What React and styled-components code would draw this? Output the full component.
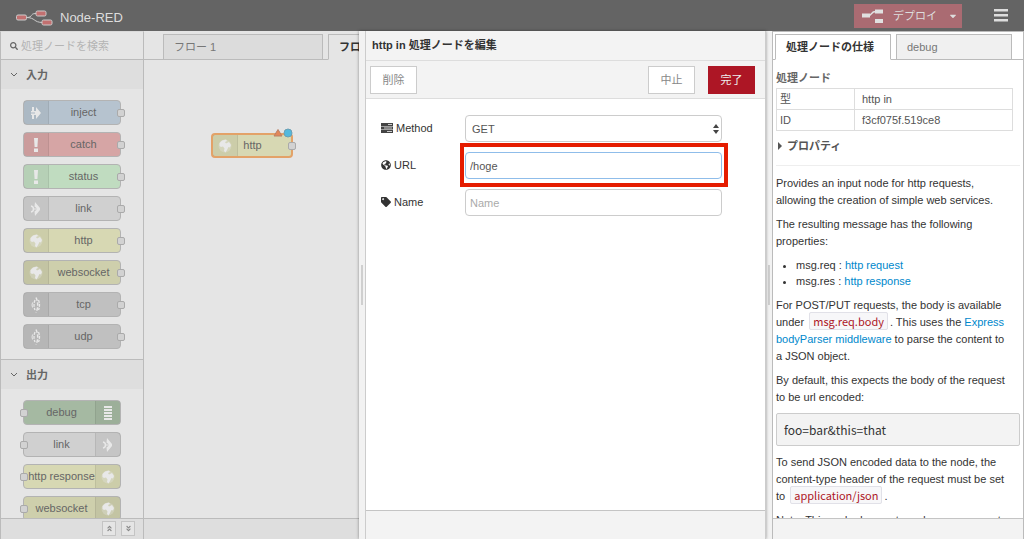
import React from "react";
import styled, { createGlobalStyle, css } from "styled-components";
import { FaSearch, FaGlobeAmericas, FaTag, FaAngleDoubleUp, FaAngleDoubleDown, FaCaretDown } from "react-icons/fa";

const GlobalStyle = createGlobalStyle`
  *, *::before, *::after { box-sizing: border-box; }
  body {
    margin: 0;
    color: #333;
    background: #e5e5e5;
    font: 11px/16px "Liberation Sans", "Noto Sans CJK JP", sans-serif;
  }
  button, input, select { font: inherit; color: inherit; }
  ul, p, h2, h3, pre { margin: 0; padding: 0; }
`;

const Page = styled.div`
  display: flex;
  flex-direction: column;
  height: 100vh;
  overflow: hidden;
`;

const Header = styled.header`
  display: flex;
  align-items: center;
  flex: none;
  height: 31px;
  padding: 0 16px;
  background: #646464;
  color: #ddd;
`;

const Brand = styled.div`
  display: flex;
  align-items: center;
  gap: 7px;
  flex: 1;
  padding-top: 4px;
  font-size: 13px;
`;

const DeployButton = styled.button`
  display: flex;
  align-items: center;
  gap: 9px;
  height: 24px;
  padding: 0 4px 0 7px;
  border: 0;
  background: #aa6b72;
  color: #ddd;
  font-size: 11px;
  svg:last-child { margin-left: 2px; }
`;

const MenuButton = styled.button`
  display: flex;
  margin-left: 32px;
  padding: 0;
  border: 0;
  background: none;
  color: #ddd;
`;

const Main = styled.main`
  display: flex;
  flex: 1;
  min-height: 0;
`;

const Palette = styled.aside`
  display: flex;
  flex-direction: column;
  flex: none;
  width: 144px;
  border: 1px solid #bbb;
  border-bottom: 0;
  border-top-color: #dadada;
  color: #666;
`;

const SearchRow = styled.label`
  display: flex;
  align-items: center;
  gap: 3px;
  flex: none;
  height: 28px;
  padding-left: 9px;
  border-bottom: 1px solid #bbb;
  svg { flex: none; }
`;

const SearchInput = styled.input`
  width: 100%;
  min-width: 0;
  padding: 0;
  border: 0;
  outline: 0;
  background: none;
  &::placeholder { color: #b4b4b4; opacity: 1; }
`;

const PaletteScroll = styled.div`
  flex: 1;
  min-height: 0;
  overflow: hidden;
`;

const Category = styled.section`
  border-bottom: 1px solid #bbb;
`;

const CategoryHeader = styled.h3`
  display: flex;
  align-items: center;
  gap: 8px;
  height: 29px;
  padding-left: 9px;
  background: #dedede;
  font-size: 11px;
`;

const NodeList = styled.div`
  display: flex;
  flex-direction: column;
  align-items: flex-start;
  gap: 7px;
  padding: 11px 22px 10px;
`;

const Node = styled.div`
  position: relative;
  display: flex;
  flex-direction: ${(p) => (p.$output ? "row-reverse" : "row")};
  width: ${(p) => p.$width || 98}px;
  height: 25px;
  border: ${(p) => (p.$selected ? "2px solid #e3a268" : "1px solid #b3b3b3")};
  border-radius: 4px;
  background: ${(p) => p.$color};
  color: #666;
`;

const NodeIcon = styled.span`
  display: flex;
  align-items: center;
  justify-content: center;
  flex: none;
  width: 25px;
  background: rgba(0, 0, 0, 0.05);
  color: #e8e8e8;
  ${(p) => (p.$output ? css`border-left: 1px solid #0001;` : css`border-right: 1px solid #0001;`)}
`;

const NodeLabel = styled.span`
  flex: 1;
  padding: ${(p) => (p.$output ? "0 0 0 4px" : p.$selected ? "0 24px 0 0" : "0 2px 0 0")};
  line-height: ${(p) => (p.$selected ? 20 : 22)}px;
  text-align: center;
  white-space: nowrap;
`;

const Port = styled.i`
  position: absolute;
  top: 50%;
  ${(p) => (p.$output ? "left: -4px" : "right: -5px")};
  width: 8px;
  height: 8px;
  margin-top: -4px;
  border: 1px solid #aaa;
  border-radius: 2px;
  background: #d2d2d2;
`;

const Footer = styled.footer`
  display: flex;
  justify-content: flex-end;
  gap: 5px;
  flex: none;
  height: ${(p) => p.$height || 21}px;
  padding: 2px 8px;
  border-top: 1px solid ${(p) => (p.$dim ? "#bbb" : "#c4c4c4")};
  background: ${(p) => (p.$dim ? "#dedede" : "#f3f3f3")};
`;

const SmallButton = styled.button`
  display: flex;
  align-items: center;
  justify-content: center;
  width: 14px;
  height: 15px;
  padding: 0;
  border: 1px solid #c4c4c4;
  background: #e5e5e5;
  color: #888;
`;

const Workspace = styled.section`
  display: flex;
  flex-direction: column;
  flex: 1;
  min-width: 0;
  overflow: hidden;
`;

const Tabs = styled.div`
  display: flex;
  flex: none;
  gap: 5px;
  height: ${(p) => (p.$sidebar ? 28 : 29)}px;
  padding: ${(p) => (p.$sidebar ? "2px 11px 0 2px" : "3px 0 0 19px")};
  box-shadow: inset 0 -1px #bbb;
`;

const Tab = styled.button`
  flex: ${(p) => (p.$fill ? "1 1 0" : "none")};
  width: ${(p) => (p.$fill ? "auto" : "160px")};
  height: 26px;
  padding: 0 10px;
  border: 1px solid #bbb;
  border-bottom-color: ${(p) => (p.$active ? p.$bg : "#bbb")};
  background: ${(p) => p.$bg};
  color: ${(p) => (p.$active ? "#333" : "#777")};
  font-weight: ${(p) => (p.$active ? "bold" : "normal")};
  text-align: left;
  white-space: nowrap;
`;

const Canvas = styled.div`
  position: relative;
  flex: 1;
`;

const CanvasNode = styled.div`
  position: absolute;
  left: 67px;
  top: 73px;
`;

const Badges = styled.svg`
  position: absolute;
  right: 0;
  top: -5px;
`;

const Tray = styled.section`
  display: flex;
  flex: none;
  width: 407px;
  border-right: 1px solid #ccc;
  box-shadow: 0 0 3px rgba(0, 0, 0, 0.4);
  z-index: 1;
`;

const Splitter = styled.div`
  display: flex;
  align-items: center;
  justify-content: center;
  flex: none;
  width: 6px;
  background: #f2f2f2;
  &::after {
    content: "";
    width: 2px;
    height: 40px;
    background: #cfcfcf;
  }
`;

const TrayPanel = styled.form`
  display: flex;
  flex-direction: column;
  flex: 1;
  border-left: 1px solid #ccc;
  background: #fff;
`;

const TrayTitle = styled.h2`
  height: 30px;
  padding-left: 6px;
  border-bottom: 1px solid #ddd;
  background: #f3f3f3;
  font-size: 11px;
  line-height: 29px;
`;

const TrayToolbar = styled.div`
  display: flex;
  align-items: center;
  gap: 13px;
  height: 38px;
  padding: 0 10px 0 4px;
  border-bottom: 1px solid #ddd;
  background: #f3f3f3;
`;

const Button = styled.button`
  width: 47px;
  height: 28px;
  padding: 0;
  border: 1px solid ${(p) => (p.$primary ? "#ad1625" : "#ccc")};
  background: ${(p) => (p.$primary ? "#ad1625" : "#fff")};
  color: ${(p) => (p.$primary ? "#eee" : "#888")};
`;

const Spacer = styled.span`
  flex: 1;
`;

const Fields = styled.div`
  display: flex;
  flex-direction: column;
  gap: 10px;
  flex: 1;
  padding: 16px 43px 0 15px;
`;

const Field = styled.div`
  position: relative;
  display: flex;
  align-items: center;
  height: 27px;
  label {
    display: flex;
    align-items: center;
    gap: 3px;
    flex: none;
    width: 84px;
    padding-bottom: 2px;
  }
`;

const control = css`
  flex: 1;
  min-width: 0;
  height: 27px;
  padding: 0 4px;
  border: 1px solid ${(p) => (p.$focus ? "#8fbdea" : "#ccc")};
  border-radius: 4px;
  outline: 0;
  background: #fff;
  color: #555;
`;

const Input = styled.input`
  ${control}
  &::placeholder { color: #aaa; opacity: 1; }
`;

const Select = styled.select`
  ${control}
  padding: 0 6px;
  appearance: none;
`;

const SelectArrows = styled.svg`
  position: absolute;
  right: 3px;
  top: 9px;
  pointer-events: none;
`;

const Highlight = styled.div`
  position: absolute;
  inset: -9px -6px -8px 79px;
  border: 4px solid #e51c00;
  pointer-events: none;
`;

const Sidebar = styled.aside`
  display: flex;
  flex-direction: column;
  flex: none;
  width: 252px;
  border: 1px solid #bbb;
  border-bottom: 0;
  background: #fff;
`;

const Info = styled.div`
  flex: 1;
  min-height: 0;
  overflow: hidden;
  padding: 8px 3px 0;
`;

const InfoTitle = styled.h3`
  color: #666;
  font-size: 11px;
  line-height: 20px;
`;

const Properties = styled.table`
  width: calc(100% - 7px);
  border-collapse: collapse;
  color: #555;
  font-size: 11px;
  th, td {
    height: 21px;
    padding: 0 7px;
    border: 1px solid #ddd;
    font-weight: normal;
    text-align: left;
  }
  th { width: 78px; padding: 0 3px; }
`;

const Disclosure = styled.button`
  display: flex;
  align-items: center;
  gap: 5px;
  width: 100%;
  height: 35px;
  padding: 0 0 4px 2px;
  border: 0;
  border-bottom: 1px solid #eee;
  background: none;
  color: #555;
  font-weight: bold;
`;

const Help = styled.div`
  padding-top: 9px;
  line-height: 17px;
  p { margin-bottom: 7px; padding-right: 12px; }
  a { color: #0088cc; text-decoration: none; }
  ul { margin-bottom: 8px; padding-left: 20px; line-height: 16px; }
`;

const Code = styled.code`
  margin: 0 2px;
  padding: 0 3px;
  border: 1px solid #e1e1e8;
  border-radius: 2px;
  background: #f7f7f9;
  color: #ad1625;
  font: 11px/14px "Noto Sans CJK JP", sans-serif;
`;

const Pre = styled.pre`
  margin-bottom: 8px;
  padding: 0 7px;
  border: 1px solid #ccc;
  border-radius: 2px;
  background: #f3f3f3;
  font: 12px/31px "Noto Sans CJK JP", sans-serif;
`;

const Logo = () => (
  <svg width="37" height="16" viewBox="0 0 37 16" fill="#c27070" stroke="#ccc" strokeWidth="1">
    <path d="M10 7.500C18 7.500 13 3.500 20 3.500M10 7.500C20 7.500 17 12.500 27 12.500" fill="none" />
    <rect x="0.500" y="5" width="10" height="5" rx="1.500" />
    <rect x="20" y="1" width="10" height="5" rx="1.500" />
    <rect x="26" y="10" width="10" height="5" rx="1.500" />
  </svg>
);

const DeployIcon = () => (
  <svg width="23" height="16" viewBox="0 0 23 16" fill="#e0e0e0">
    <path d="M7 7.500C12 7.500 9 3.500 15 3.500" fill="none" stroke="#e0e0e0" strokeWidth="1.500" />
    <path d="M1 5.500h8v4H1zM14 1.500h8v4h-8zM14 11h8v4h-8z" />
  </svg>
);

const MethodIcon = () => (
  <svg width="12" height="10" fill="#444">
    <path d="M0 0h12v3H0zM0 3.500h12v3H0zM0 7h12v3H0z" />
    <path d="M7 1h4v1H7zM3 4.500h8v1H3zM6 8h5v1H6z" fill="#ccc" />
  </svg>
);

const Chevron = () => (
  <svg width="8" height="6" fill="none" stroke="currentColor"><path d="M1 1l3 3 3-3" /></svg>
);

const glyphs = {
  inject: <path d="M4 2h2v4h2V2l5 6-5 6v-4H6v4H4v-4H3V8.500h4v-1H3V6h1z" />,
  alert: <path d="M6 1h4l-.6 9H6.600zM6 11.500h4v3.500H6z" />,
  link: (
    <g>
      <path d="M7 1l5 6v2l-5 6-.5-4.500L9 8.500H6v-1h3L6.500 5.500z" />
      <path d="M3 5Q5.500 5.500 5.500 8Q5.500 10.500 3 11" fill="none" stroke="currentColor" strokeWidth="1.500" />
    </g>
  ),
  waves: (
    <g fill="none" stroke="currentColor">
      <path d="M4.500 5.500q-1 2.500 0 5" />
      <path d="M7 3q-2 5 0 10" strokeWidth="1.300" strokeDasharray="3 1" />
      <path d="M8 .5q3.500 7.500 0 15" strokeWidth="1.500" strokeDasharray="3.500 1.500" />
      <path d="M10.500 3q2 5 0 10" strokeWidth="1.300" strokeDasharray="3 1" />
    </g>
  ),
  debug: <path d="M4 1h8v2H4zM4 4h8v2H4zM4 7h8v2H4zM4 10h8v2H4zM4 13h8v2H4z" />,
  globe: (
    <g>
      <circle cx="8" cy="8" r="6.500" opacity="0.300" />
      <path d="M2.500 5L5 2.500 9 1.500l1 1.500-2 1 1 1.500L12 4l2 3-1 2.500-1.500-.5L10 12l-1.500 2.500L7 13l.5-2.500L6 8.500 4 9 2.500 8z" />
    </g>
  ),
};

const Glyph = ({ name }) => (
  <svg width="16" height="16" viewBox="0 0 16 16" fill="currentColor">{glyphs[name]}</svg>
);

const FlowNode = ({ label, icon, color, output, width, selected }) => (
  <Node $color={color} $output={output} $width={width} $selected={selected}>
    <NodeIcon $output={output}><Glyph name={icon} /></NodeIcon>
    <NodeLabel $output={output} $selected={selected}>{label}</NodeLabel>
    <Port $output={output} />
  </Node>
);

const categories = [
  {
    title: "入力",
    nodes: [
      ["inject", "inject", "#b6c3cf"],
      ["catch", "alert", "#d6a5a5"],
      ["status", "alert", "#c0dcc0"],
      ["link", "link", "#d0d0d0"],
      ["http", "globe", "#d7d8b3"],
      ["websocket", "globe", "#cecfac"],
      ["tcp", "waves", "#c0c0c0"],
      ["udp", "waves", "#c0c0c0"],
    ],
  },
  {
    title: "出力",
    output: true,
    nodes: [
      ["debug", "debug", "#a5b9a2"],
      ["link", "link", "#d0d0d0"],
      ["http response", "globe", "#d7d8b3"],
      ["websocket", "globe", "#cecfac"],
    ],
  },
];

export default function App() {
  return (
    <Page>
      <GlobalStyle />
      <Header>
        <Brand><Logo />Node-RED</Brand>
        <DeployButton type="button"><DeployIcon />デプロイ<FaCaretDown size={10} /></DeployButton>
        <MenuButton type="button" aria-label="menu">
          <svg width="14" height="13" fill="currentColor"><path d="M0 0h14v2.500H0zM0 5h14v2.500H0zM0 10h14v2.500H0z" /></svg>
        </MenuButton>
      </Header>
      <Main>
        <Palette>
          <SearchRow>
            <FaSearch size={8} />
            <SearchInput aria-label="search" placeholder="処理ノードを検索" />
          </SearchRow>
          <PaletteScroll>
            {categories.map((c) => (
              <Category key={c.title}>
                <CategoryHeader><Chevron />{c.title}</CategoryHeader>
                <NodeList>
                  {c.nodes.map(([label, icon, color]) => (
                    <FlowNode key={label} label={label} icon={icon} color={color} output={c.output} />
                  ))}
                </NodeList>
              </Category>
            ))}
          </PaletteScroll>
          <Footer $dim>
            <SmallButton type="button" aria-label="collapse"><FaAngleDoubleUp size={7} /></SmallButton>
            <SmallButton type="button" aria-label="expand"><FaAngleDoubleDown size={7} /></SmallButton>
          </Footer>
        </Palette>
        <Workspace>
          <Tabs>
            <Tab type="button" $bg="#dcdcdc">フロー 1</Tab>
            <Tab type="button" $bg="#e5e5e5" $active>フロー 2</Tab>
          </Tabs>
          <Canvas>
            <CanvasNode>
              <FlowNode label="http" icon="globe" color="#d7d8b3" width={82} selected />
              <Badges width="20" height="10">
                <path d="M5 1.500L9 8H1z" fill="#e3875a" stroke="#b98166" />
                <circle cx="15" cy="5" r="4" fill="#53b9dd" stroke="#6c9fb3" />
              </Badges>
            </CanvasNode>
          </Canvas>
          <Footer $dim />
        </Workspace>
        <Tray>
          <Splitter />
          <TrayPanel>
            <TrayTitle>http in 処理ノードを編集</TrayTitle>
            <TrayToolbar>
              <Button type="button">削除</Button>
              <Spacer />
              <Button type="button">中止</Button>
              <Button type="button" $primary>完了</Button>
            </TrayToolbar>
            <Fields>
              <Field>
                <label htmlFor="method"><MethodIcon />Method</label>
                <Select id="method"><option>GET</option></Select>
                <SelectArrows width="6" height="10" fill="#444"><path d="M3 0l3 4H0zM3 10l3-4H0z" /></SelectArrows>
              </Field>
              <Field>
                <label htmlFor="url"><FaGlobeAmericas size={10} />URL</label>
                <Input id="url" defaultValue="/hoge" $focus />
                <Highlight />
              </Field>
              <Field>
                <label htmlFor="name"><FaTag size={10} />Name</label>
                <Input id="name" placeholder="Name" />
              </Field>
            </Fields>
            <Footer $height={29} />
          </TrayPanel>
        </Tray>
        <Splitter />
        <Sidebar>
          <Tabs $sidebar>
            <Tab type="button" $bg="#fff" $active $fill>処理ノードの仕様</Tab>
            <Tab type="button" $bg="#f0f0f0" $fill>debug</Tab>
          </Tabs>
          <Info>
            <InfoTitle>処理ノード</InfoTitle>
            <Properties>
              <tbody>
                <tr><th scope="row">型</th><td>http in</td></tr>
                <tr><th scope="row">ID</th><td>f3cf075f.519ce8</td></tr>
              </tbody>
            </Properties>
            <Disclosure type="button">
              <svg width="4" height="8" fill="currentColor"><path d="M0 0l4 4-4 4z" /></svg>
              プロパティ
            </Disclosure>
            <Help>
              <p>Provides an input node for http requests, allowing the creation of simple web services.</p>
              <p>The resulting message has the following properties:</p>
              <ul>
                <li>msg.req : <a href="#request">http request</a></li>
                <li>msg.res : <a href="#response">http response</a></li>
              </ul>
              <p>For POST/PUT requests, the body is available under <Code>msg.req.body</Code>. This uses the <a href="#parser">Express bodyParser middleware</a> to parse the content to a JSON object.</p>
              <p>By default, this expects the body of the request to be url encoded:</p>
              <Pre>foo=bar&amp;this=that</Pre>
              <p>To send JSON encoded data to the node, the content-type header of the request must be set to <Code>application/json</Code>.</p>
              <p>Note: This node does not send any response to the http request.</p>
            </Help>
          </Info>
          <Footer />
        </Sidebar>
      </Main>
    </Page>
  );
}
